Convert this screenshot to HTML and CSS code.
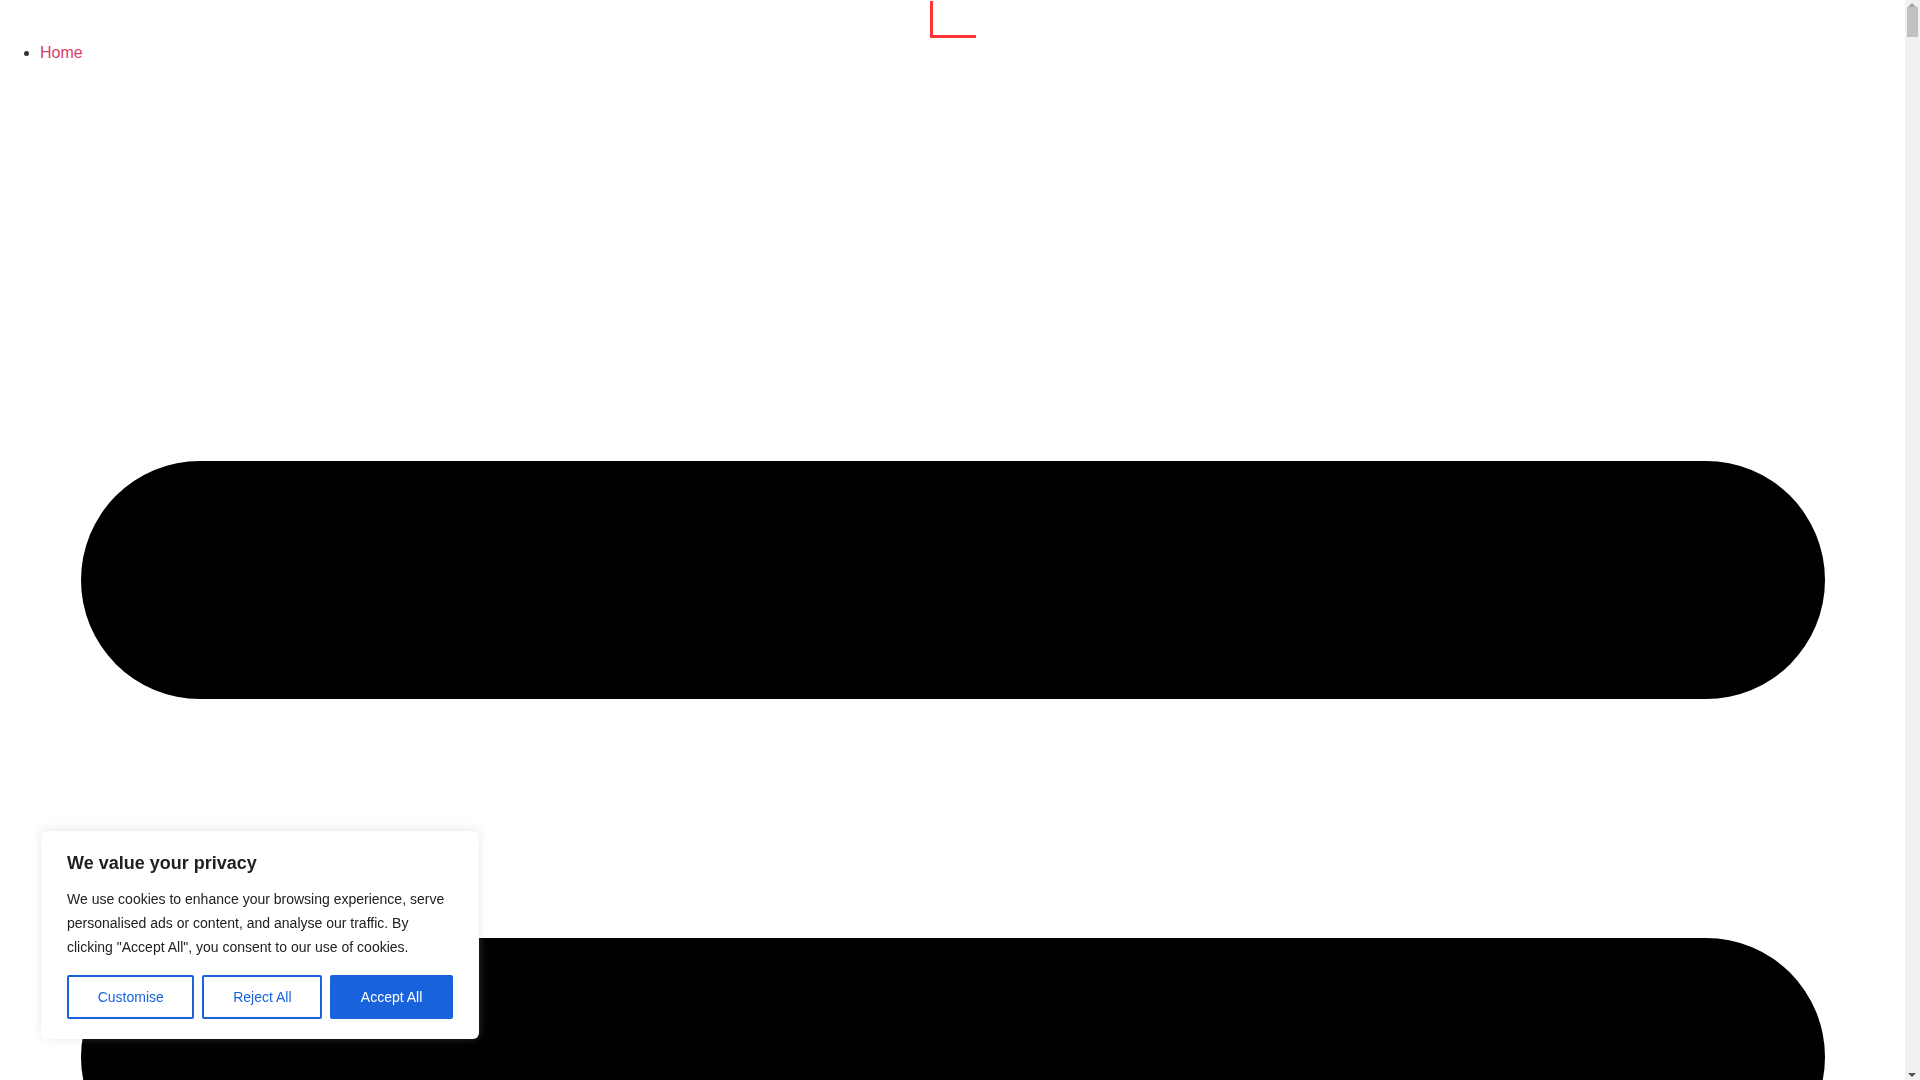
FILE: index.html
```html
<!DOCTYPE html>
<html lang="en">
<head>
<meta charset="utf-8">
<title>Home</title>
<link rel="stylesheet" href="styles.css">
</head>
<body>
<div class="page">
  <header class="site-header">
    <a class="logo" href="#" aria-label="Logo">
      <svg class="logo-svg" width="46" height="40" viewBox="0 0 46 40">
        <rect x="0" y="1" width="3" height="37" fill="#ff3333"/>
        <rect x="0" y="35" width="46" height="3" fill="#ff3333"/>
      </svg>
    </a>
    <ul class="menu">
      <li><a href="#">Home</a></li>
    </ul>
  </header>
  <svg class="burger" width="1744" height="1430" viewBox="0 0 1744 1430">
    <rect x="0" y="0" width="1744" height="238" rx="119" ry="119" fill="#000"/>
    <rect x="0" y="477" width="1744" height="238" rx="119" ry="119" fill="#000"/>
    <rect x="0" y="954" width="1744" height="238" rx="119" ry="119" fill="#000"/>
  </svg>
</div>

<div class="scrollbar" aria-hidden="true">
  <span class="sb-arrow sb-up"></span>
  <span class="sb-thumb"></span>
  <span class="sb-arrow sb-down"></span>
</div>

<div class="cookie-card">
  <p class="cookie-title">We value your privacy</p>
  <p class="cookie-text">We use cookies to enhance your browsing experience, serve personalised ads or content, and analyse our traffic. By clicking "Accept All", you consent to our use of cookies.</p>
  <div class="cookie-buttons">
    <button class="btn btn-outline">Customise</button>
    <button class="btn btn-outline">Reject All</button>
    <button class="btn btn-solid">Accept All</button>
  </div>
</div>
</body>
</html>
```
FILE: styles.css
```css
html, body {
  margin: 0;
  padding: 0;
  background: #fff;
}

body {
  font-family: "Liberation Sans", Arial, sans-serif;
  font-size: 16px;
  color: #333;
}

.page {
  width: calc(100% - 15px);
  min-height: 37800px;
}

.logo {
  display: block;
  width: 46px;
  margin: 0 auto;
}

.logo-svg {
  display: block;
}

.menu {
  margin: 4px 0 0;
  padding-left: 40px;
  line-height: 18px;
}

.menu a {
  color: #d6406e;
  text-decoration: none;
}

.burger {
  display: block;
  margin: 399px auto 0;
}

/* simulated browser scrollbar */
.scrollbar {
  position: fixed;
  top: 0;
  right: 0;
  width: 15px;
  height: 100vh;
  background: #f1f1f1;
  z-index: 20;
}

.sb-arrow {
  position: absolute;
  left: 3px;
  width: 0;
  height: 0;
  border-left: 4px solid transparent;
  border-right: 4px solid transparent;
}

.sb-up {
  top: 3px;
  border-bottom: 4px solid #a3a3a3;
}

.sb-down {
  bottom: 3px;
  border-top: 4px solid #505050;
}

.sb-thumb {
  position: absolute;
  top: 7px;
  left: 2px;
  width: 11px;
  height: 30px;
  background: #c1c1c1;
}

.cookie-card {
  position: fixed;
  left: 41px;
  bottom: 41px;
  width: 438px;
  box-sizing: border-box;
  padding: 20px 26px;
  background: #fff;
  border-radius: 6px;
  box-shadow: 0 -1px 10px 0 rgba(172, 171, 171, 0.3);
  color: #212121;
  z-index: 10;
}

.cookie-title {
  margin: 0 0 12px;
  font-size: 18px;
  font-weight: 700;
  line-height: 24px;
  color: #212121;
}

.cookie-text {
  margin: 0;
  font-size: 14px;
  line-height: 24px;
  color: #212121;
}

.cookie-buttons {
  display: flex;
  margin-top: 16px;
}

.btn {
  flex: auto;
  margin: 0 8px 0 0;
  padding: 8px;
  border: 2px solid #1863dc;
  border-radius: 2px;
  font-family: "Liberation Sans", Arial, sans-serif;
  font-size: 14px;
  font-weight: 500;
  line-height: 24px;
  cursor: pointer;
}

.btn:last-child {
  margin-right: 0;
}

.btn-outline {
  background: #fff;
  color: #1863dc;
}

.btn-solid {
  background: #1863dc;
  color: #fff;
}
```
